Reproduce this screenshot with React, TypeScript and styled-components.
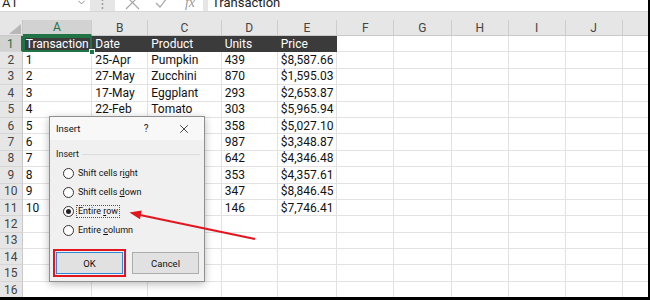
import React from 'react';
import styled, { createGlobalStyle, css } from 'styled-components';
import { X, ChevronDown } from 'lucide-react';

const GlobalStyle = createGlobalStyle`
  html, body { margin: 0; padding: 0; background: #fff; }
  body { font-family: Roboto, "Liberation Sans", sans-serif; }
`;

const GREEN = '#217346';
const COLS = [22.7, 69.6, 56, 73.4, 56, 59.6, 57, 57.4, 57, 57, 57, 64];
const LETTERS = ['', 'A', 'B', 'C', 'D', 'E', 'F', 'G', 'H', 'I', 'J', 'K'];

const DATA: string[][] = [
    ['Transaction', 'Date', 'Product', 'Units', 'Price'],
    ['1', '25-Apr', 'Pumpkin', '439', '$8,587.66'],
    ['2', '27-May', 'Zucchini', '870', '$1,595.03'],
    ['3', '17-May', 'Eggplant', '293', '$2,653.87'],
    ['4', '22-Feb', 'Tomato', '303', '$5,965.94'],
    ['5', '', '', '358', '$5,027.10'],
    ['6', '', '', '987', '$3,348.87'],
    ['7', '', '', '642', '$4,346.48'],
    ['8', '', '', '353', '$4,357.61'],
    ['9', '', '', '347', '$8,846.45'],
    ['10', '', '', '146', '$7,746.41'],
];
const ROW_COUNT = 16;

const Window = styled.div`
    position: relative;
    width: 648px;
    height: 297px;
    border-right: 2px solid #000;
    border-bottom: 3px solid #000;
    background: #e6e6e6;
    overflow: hidden;
    display: flex;
    flex-direction: column;
`;

/* ---------- formula bar ---------- */

const FormulaBar = styled.div`
    display: flex;
    align-items: flex-end;
    height: 11px;
    flex: none;
    overflow: hidden;
    border-bottom: 1px solid #d6d6d6;
    margin-bottom: 8px;
`;

const NameBox = styled.div`
    width: 90px;
    height: 17px;
    flex: none;
    box-sizing: border-box;
    background: #fff;
    display: flex;
    align-items: center;
    justify-content: space-between;
    padding: 0 3px 0 2px;
    font-size: 13px;
    color: #222;
`;

const Grip = styled.div`
    width: 25px;
    height: 17px;
    flex: none;
    display: flex;
    align-items: center;
    justify-content: center;
`;

const FxArea = styled.div`
    width: 88px;
    height: 17px;
    flex: none;
    background: #fff;
    display: flex;
    align-items: center;
    gap: 9px;
    padding-left: 7px;
    box-sizing: border-box;
    color: #9a9a9a;
`;

const FxIcon = styled.span`
    width: 20px;
    display: flex;
    justify-content: center;
    font-family: "Liberation Serif", serif;
    font-style: italic;
    font-size: 14px;
`;

const FormulaInput = styled.div`
    flex: 1;
    height: 17px;
    margin-left: 5px;
    background: #fff;
    display: flex;
    align-items: center;
    padding-left: 4px;
    font-size: 13px;
    color: #222;
`;

/* ---------- sheet ---------- */

const Sheet = styled.div<{ $cols: string }>`
    display: grid;
    grid-template-columns: ${p => p.$cols};
    grid-template-rows: 16px repeat(${ROW_COUNT}, 16.4px);
    flex: none;
`;

type Kind = 'corner' | 'colHead' | 'rowHead' | 'title' | 'data';

const kindStyles: Record<Kind, ReturnType<typeof css>> = {
    corner: css`
        background: #e6e6e6;
        border-right: 1px solid #c9c9c9;
        border-bottom: 1px solid #c9c9c9;
        justify-content: flex-end;
        align-items: flex-end;
    `,
    colHead: css`
        background: #e6e6e6;
        border-right: 1px solid #cdcdcd;
        border-bottom: 1px solid #c9c9c9;
        justify-content: center;
        color: #444;
        font-size: 12px;
    `,
    rowHead: css`
        background: #e6e6e6;
        border-right: 1px solid #c9c9c9;
        border-bottom: 1px solid #d6d6d6;
        justify-content: center;
        color: #444;
        font-size: 12px;
    `,
    title: css`
        background: #3b3b3b;
        color: #fff;
        padding-left: 3px;
    `,
    data: css`
        background: #fff;
        color: #111;
        border-right: 1px solid #e2e2e2;
        border-bottom: 1px solid #e2e2e2;
        padding-left: 3px;
    `,
};

const activeStyles: Partial<Record<Kind, ReturnType<typeof css>>> = {
    colHead: css`
        background: #d2d2d2;
        color: ${GREEN};
        border-bottom: 2px solid ${GREEN};
    `,
    rowHead: css`
        background: #d2d2d2;
        color: ${GREEN};
        border-right: 2px solid ${GREEN};
    `,
    title: css`
        z-index: 2;
        box-shadow: inset 0 0 0 2px ${GREEN};
        &::after {
            content: '';
            position: absolute;
            right: -3px;
            bottom: -3px;
            width: 4px;
            height: 4px;
            background: ${GREEN};
            border: 1px solid #fff;
        }
    `,
};

const Cell = styled.div<{ $kind: Kind; $active?: boolean }>`
    position: relative;
    box-sizing: border-box;
    display: flex;
    align-items: center;
    min-width: 0;
    white-space: nowrap;
    font-size: 12px;
    ${p => kindStyles[p.$kind]}
    ${p => p.$active && activeStyles[p.$kind]}
`;

/* ---------- dialog ---------- */

const Dialog = styled.div`
    position: absolute;
    left: 49px;
    top: 116px;
    width: 156px;
    height: 166px;
    box-sizing: border-box;
    border: 1px solid #8f8f8f;
    background: #f0f0f0;
    box-shadow: 0 2px 8px rgba(0, 0, 0, 0.28);
    display: flex;
    flex-direction: column;
    font-family: Roboto, "Noto Sans", sans-serif;
    font-size: 9px;
    color: #111;
`;

const TitleBar = styled.div`
    height: 23px;
    flex: none;
    background: #f8f8f8;
    display: flex;
    align-items: center;
    padding-left: 6px;
    font-size: 9.5px;
`;

const Title = styled.span`
    flex: 1;
`;

const TitleButton = styled.span<{ $gap: number }>`
    width: 20px;
    display: flex;
    justify-content: center;
    margin-right: ${p => p.$gap}px;
    font-size: 10px;
    color: #222;
`;

const GroupHeader = styled.div`
    display: flex;
    align-items: center;
    height: 14px;
    margin-top: 7px;
    padding: 0 4px 0 6px;
    color: #222;

    &::after {
        content: '';
        flex: 1;
        height: 1px;
        margin-left: 3px;
        background: #dcdcdc;
    }
`;

const RadioList = styled.div`
    display: flex;
    flex-direction: column;
    margin-top: 3px;
    padding-left: 13px;
`;

const RadioRow = styled.label`
    height: 19px;
    display: flex;
    align-items: center;
    gap: 2px;
`;

const RadioCircle = styled.span<{ $checked?: boolean }>`
    width: 11px;
    height: 11px;
    box-sizing: border-box;
    border: 1px solid #333;
    border-radius: 50%;
    background: #fff;
    display: flex;
    align-items: center;
    justify-content: center;

    &::after {
        content: '';
        width: 5px;
        height: 5px;
        border-radius: 50%;
        background: ${p => (p.$checked ? '#222' : 'transparent')};
    }
`;

const RadioLabel = styled.span<{ $focused?: boolean }>`
    display: block;
    line-height: 11px;
    padding: 0 1px;
    white-space: pre;
    border: 1px ${p => (p.$focused ? 'dotted #555' : 'solid transparent')};
`;

const ButtonRow = styled.div`
    display: flex;
    align-items: center;
    gap: 6px;
    margin-top: 9px;
    padding-left: 3px;
`;

const Highlight = styled.span`
    display: flex;
    padding: 1px;
    border: 2px solid #e4151f;
`;

const Button = styled.span<{ $primary?: boolean }>`
    width: 67px;
    height: 22px;
    box-sizing: border-box;
    display: flex;
    align-items: center;
    justify-content: center;
    background: #e1e1e1;
    border: 1px solid ${p => (p.$primary ? '#2b8ad8' : '#adadad')};
    font-size: 9.5px;
    color: #111;
`;

const Arrow = styled.svg`
    position: absolute;
    left: 0;
    top: 0;
    width: 648px;
    height: 297px;
    pointer-events: none;
`;

function GripDots() {
    return (
        <svg width="3" height="12" viewBox="0 0 3 12">
            <circle cx="1.5" cy="3" r="1" fill="#9a9a9a" />
            <circle cx="1.5" cy="7" r="1" fill="#9a9a9a" />
            <circle cx="1.5" cy="11" r="1" fill="#9a9a9a" />
        </svg>
    );
}

function Radio({ label, checked, focused }: { label: React.ReactNode; checked?: boolean; focused?: boolean }) {
    return (
        <RadioRow>
            <RadioCircle $checked={checked} />
            <RadioLabel $focused={focused}>{label}</RadioLabel>
        </RadioRow>
    );
}

export default function App() {
    const cols = COLS.map(w => `${w}px`).join(' ');

    return (
        <Window>
            <GlobalStyle />
            <FormulaBar>
                <NameBox>
                    A1
                    <ChevronDown size={11} color="#666" strokeWidth={1.6} />
                </NameBox>
                <Grip><GripDots /></Grip>
                <FxArea>
                    <FxIcon>
                        <svg width="15" height="15" viewBox="0 0 15 15">
                            <path d="M1 1 L14 14 M14 1 L1 14" stroke="#a6a6a6" strokeWidth="1.2" fill="none" />
                        </svg>
                    </FxIcon>
                    <FxIcon>
                        <svg width="13" height="11" viewBox="0 0 13 11">
                            <path d="M1 6 L5 10 L12 1" stroke="#a6a6a6" strokeWidth="1.2" fill="none" />
                        </svg>
                    </FxIcon>
                    <FxIcon>fx</FxIcon>
                </FxArea>
                <FormulaInput>Transaction</FormulaInput>
            </FormulaBar>

            <Sheet $cols={cols}>
                {LETTERS.map((l, i) =>
                    i === 0 ? (
                        <Cell key="corner" $kind="corner">
                            <svg width="14" height="12" viewBox="0 0 14 12">
                                <polygon points="13,1 13,11 1,11" fill="#b7b7b7" />
                            </svg>
                        </Cell>
                    ) : (
                        <Cell key={l} $kind="colHead" $active={l === 'A'}>{l}</Cell>
                    )
                )}
                {Array.from({ length: ROW_COUNT }, (_, r) => (
                    <React.Fragment key={r}>
                        <Cell $kind="rowHead" $active={r === 0}>{r + 1}</Cell>
                        {LETTERS.slice(1).map((l, c) => {
                            const value = DATA[r]?.[c] ?? '';
                            const isTitle = r === 0 && c < 5;
                            return (
                                <Cell
                                    key={l}
                                    $kind={isTitle ? 'title' : 'data'}
                                    $active={r === 0 && c === 0}
                                >
                                    {value}
                                </Cell>
                            );
                        })}
                    </React.Fragment>
                ))}
            </Sheet>

            <Dialog>
                <TitleBar>
                    <Title>Insert</Title>
                    <TitleButton $gap={18}>?</TitleButton>
                    <TitleButton $gap={10}>
                        <X size={14} strokeWidth={1.4} color="#222" />
                    </TitleButton>
                </TitleBar>
                <GroupHeader>Insert</GroupHeader>
                <RadioList>
                    <Radio label={<>Shift cells r<u>i</u>ght</>} />
                    <Radio label={<>Shift cells <u>d</u>own</>} />
                    <Radio label={<>Entire <u>r</u>ow</>} checked focused />
                    <Radio label={<>Entire <u>c</u>olumn</>} />
                </RadioList>
                <ButtonRow>
                    <Highlight>
                        <Button $primary>OK</Button>
                    </Highlight>
                    <Button>Cancel</Button>
                </ButtonRow>
            </Dialog>

            <Arrow viewBox="0 0 648 297">
                <line x1="255" y1="239" x2="140" y2="215" stroke="#e4151f" strokeWidth="2" />
                <polygon points="129.5,212.6 141.6,210.6 140,219.2" fill="#e4151f" />
            </Arrow>
        </Window>
    );
}
